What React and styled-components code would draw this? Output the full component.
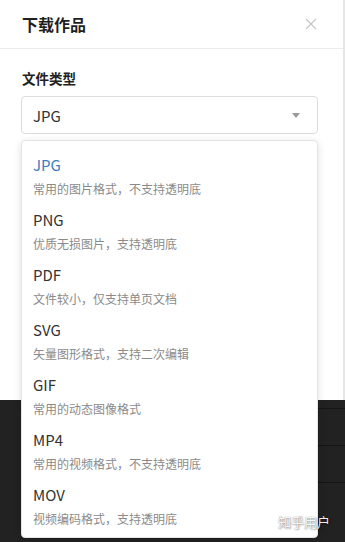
import React from "react";
import styled, { createGlobalStyle } from "styled-components";

const Global = createGlobalStyle`
  html, body { margin: 0; padding: 0; }
  body {
    background: #222222;
    font-family: "Noto Sans CJK SC", "Noto Sans", sans-serif;
    width: 345px;
    height: 542px;
    overflow: hidden;
  }
`;

const Page = styled.div`
  position: relative;
  width: 345px;
  height: 542px;
  display: flex;
  flex-direction: column;
  background: #222222;
`;

const Modal = styled.div`
  width: 343px;
  height: 400px;
  background: #fff;
  border-right: 2px solid #e6e6e6;
  display: flex;
  flex-direction: column;
  flex-shrink: 0;
`;

const Header = styled.div`
  height: 48px;
  border-bottom: 1px solid #ececec;
  display: flex;
  align-items: center;
  justify-content: space-between;
  padding: 0 25px 0 22px;
`;

const Title = styled.div`
  font-size: 16px;
  font-weight: 700;
  color: #1f1f1f;
`;

const Close = styled.button`
  border: none;
  background: none;
  padding: 0;
  width: 14px;
  height: 14px;
  display: flex;
  align-items: center;
  justify-content: center;
  cursor: pointer;
`;

const Body = styled.div`
  padding: 19px 25px 0 21px;
  display: flex;
  flex-direction: column;
`;

const Label = styled.div`
  font-size: 13.5px;
  line-height: 20px;
  font-weight: 700;
  color: #222;
  padding-left: 1px;
  margin-bottom: 8px;
`;

const Select = styled.div`
  height: 38px;
  box-sizing: border-box;
  border: 1px solid #dcdcdc;
  border-radius: 4px;
  display: flex;
  align-items: center;
  justify-content: space-between;
  padding: 0 17px 0 11px;
  font-size: 15px;
  color: #333;
`;

const Rows = styled.div`
  flex: 1;
  display: flex;
  flex-direction: column;
  padding-top: 8px;
  padding-left: 20px;
`;

const DarkRow = styled.div`
  height: 36px;
  border-top: 1px solid #151515;
`;

const Dropdown = styled.ul`
  position: absolute;
  left: 21px;
  top: 140px;
  width: 297px;
  height: 398px;
  box-sizing: border-box;
  margin: 0;
  padding: 6px 0 5px;
  list-style: none;
  background: #fff;
  border: 1px solid #e4e4e4;
  border-radius: 4px;
  box-shadow: 0 2px 8px rgba(0, 0, 0, 0.12);
`;

const Item = styled.li`
  padding: 6px 11px 5px;
  height: 55px;
  box-sizing: border-box;
`;

const ItemName = styled.div`
  font-size: 15px;
  line-height: 24px;
  color: ${(p) => (p.$active ? "#3a7cc1" : "#333")};
`;

const ItemDesc = styled.div`
  font-size: 12px;
  line-height: 20px;
  margin-top: 2px;
  color: #8a8a8a;
`;

const Watermark = styled.div`
  position: absolute;
  left: 278px;
  top: 513px;
  font-size: 13px;
  line-height: 18px;
  color: rgba(255, 255, 255, 0.95);
  text-shadow: 0 0 1px rgba(0, 0, 0, 0.5), 1px 1px 2px rgba(0, 0, 0, 0.35);
`;

const options = [
  ["JPG", "常用的图片格式，不支持透明底"],
  ["PNG", "优质无损图片，支持透明底"],
  ["PDF", "文件较小，仅支持单页文档"],
  ["SVG", "矢量图形格式，支持二次编辑"],
  ["GIF", "常用的动态图像格式"],
  ["MP4", "常用的视频格式，不支持透明底"],
  ["MOV", "视频编码格式，支持透明底"],
];

export default function App() {
  return (
    <>
      <Global />
      <Page>
        <Modal>
          <Header>
            <Title>下载作品</Title>
            <Close aria-label="关闭">
              <svg width="12" height="12" viewBox="0 0 12 12">
                <path d="M1 1L11 11M11 1L1 11" stroke="#c4c4c4" strokeWidth="1.1" fill="none" />
              </svg>
            </Close>
          </Header>
          <Body>
            <Label>文件类型</Label>
            <Select>
              <span>JPG</span>
              <svg width="8" height="5" viewBox="0 0 8 5">
                <path d="M0 0H8L4 5Z" fill="#9a9a9a" />
              </svg>
            </Select>
          </Body>
        </Modal>
        <Rows>
          <DarkRow />
          <DarkRow />
          <DarkRow />
        </Rows>
        <Dropdown>
          {options.map(([name, desc], i) => (
            <Item key={name}>
              <ItemName $active={i === 0}>{name}</ItemName>
              <ItemDesc>{desc}</ItemDesc>
            </Item>
          ))}
        </Dropdown>
        <Watermark>知乎用户</Watermark>
      </Page>
    </>
  );
}
